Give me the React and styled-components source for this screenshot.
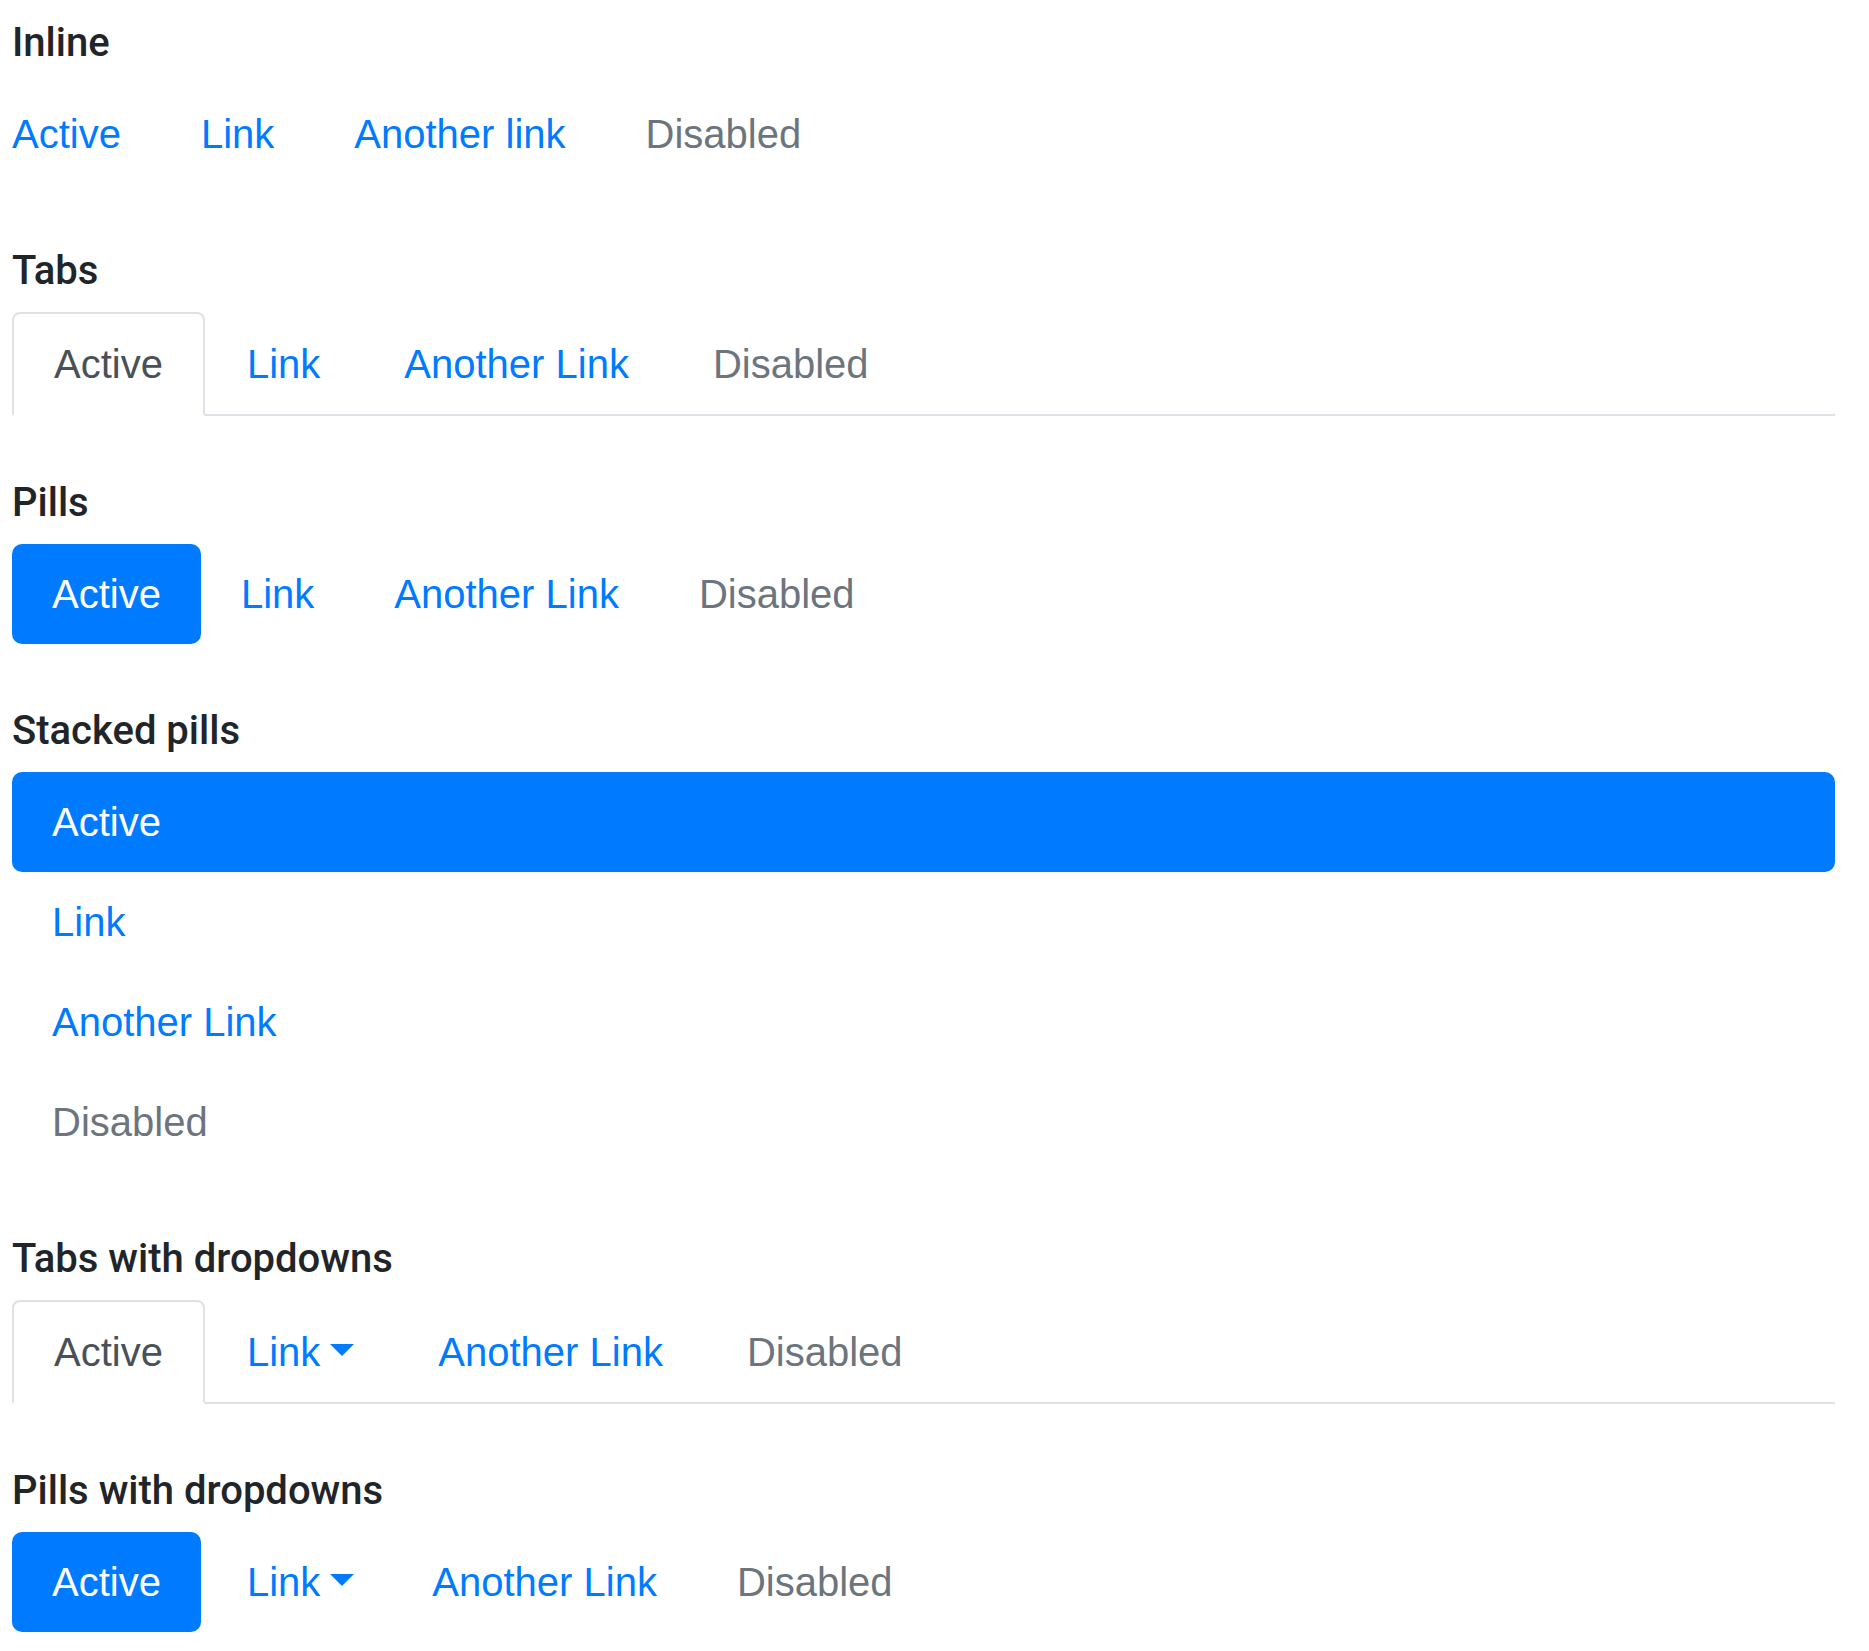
import React from 'react';
import styled, { createGlobalStyle, css } from 'styled-components';

const GlobalStyle = createGlobalStyle`
  body {
    margin: 0;
    background: #fff;
    font-family: "Liberation Sans", Arial, sans-serif;
    color: #212529;
  }
`;

const Page = styled.div`
  padding: 19px 34px 20px 12px;
`;

const Section = styled.section`
  margin-bottom: 63px;

  &:last-child {
    margin-bottom: 0;
  }
`;

const Heading = styled.h5`
  margin: 0 0 17px 0;
  font-family: Roboto, "Liberation Sans", sans-serif;
  font-size: 40px;
  line-height: 48px;
  font-weight: 500;
  color: #212529;
`;

const Nav = styled.nav`
  display: flex;
  flex-wrap: wrap;
  flex-direction: ${props => (props.stacked ? 'column' : 'row')};

  ${props => props.tabs && css`
    border-bottom: 2px solid #dee2e6;
  `}
`;

const NavLink = styled.a`
  display: block;
  padding: 20px 40px;
  font-size: 40px;
  line-height: 60px;
  text-decoration: none;
  color: ${props => (props.disabled ? '#6c757d' : '#007bff')};
  cursor: ${props => (props.disabled ? 'default' : 'pointer')};

  ${props => props.flush && css`
    &:first-child {
      padding-left: 0;
    }
  `}

  ${props => props.tab && css`
    border: 2px solid transparent;
    border-top-left-radius: 8px;
    border-top-right-radius: 8px;
    margin-bottom: -2px;
  `}

  ${props => props.tab && props.active && css`
    color: #495057;
    background: #fff;
    border-color: #dee2e6 #dee2e6 #fff;
  `}

  ${props => props.pill && props.active && css`
    color: #fff;
    background: #007bff;
    border-radius: 10px;
  `}

  ${props => props.pill && props.toggle && css`
    padding-left: 46px;
    padding-right: 38px;
  `}
`;

const Caret = styled.span`
  display: inline-block;
  margin-left: 10px;
  vertical-align: 10px;
  border-top: 12px solid;
  border-right: 12px solid transparent;
  border-left: 12px solid transparent;
  border-bottom: 0;
`;

function NavItems({ kind, labels, dropdown, flush }) {
  return labels.map((label, i) => (
    <NavLink
      key={label}
      tab={kind === 'tabs'}
      pill={kind === 'pills'}
      flush={flush}
      toggle={dropdown && i === 1}
      active={kind !== 'inline' && i === 0}
      disabled={i === labels.length - 1}
    >
      {label}
      {dropdown && i === 1 ? <Caret /> : null}
    </NavLink>
  ));
}

const links = ['Active', 'Link', 'Another Link', 'Disabled'];

export default function App() {
  return (
    <Page>
      <GlobalStyle />
      <Section>
        <Heading>Inline</Heading>
        <Nav>
          <NavItems kind="inline" flush labels={['Active', 'Link', 'Another link', 'Disabled']} />
        </Nav>
      </Section>

      <Section>
        <Heading>Tabs</Heading>
        <Nav tabs>
          <NavItems kind="tabs" labels={links} />
        </Nav>
      </Section>

      <Section>
        <Heading>Pills</Heading>
        <Nav>
          <NavItems kind="pills" labels={links} />
        </Nav>
      </Section>

      <Section>
        <Heading>Stacked pills</Heading>
        <Nav stacked>
          <NavItems kind="pills" labels={links} />
        </Nav>
      </Section>

      <Section>
        <Heading>Tabs with dropdowns</Heading>
        <Nav tabs>
          <NavItems kind="tabs" dropdown labels={links} />
        </Nav>
      </Section>

      <Section>
        <Heading>Pills with dropdowns</Heading>
        <Nav>
          <NavItems kind="pills" dropdown labels={links} />
        </Nav>
      </Section>
    </Page>
  );
}
